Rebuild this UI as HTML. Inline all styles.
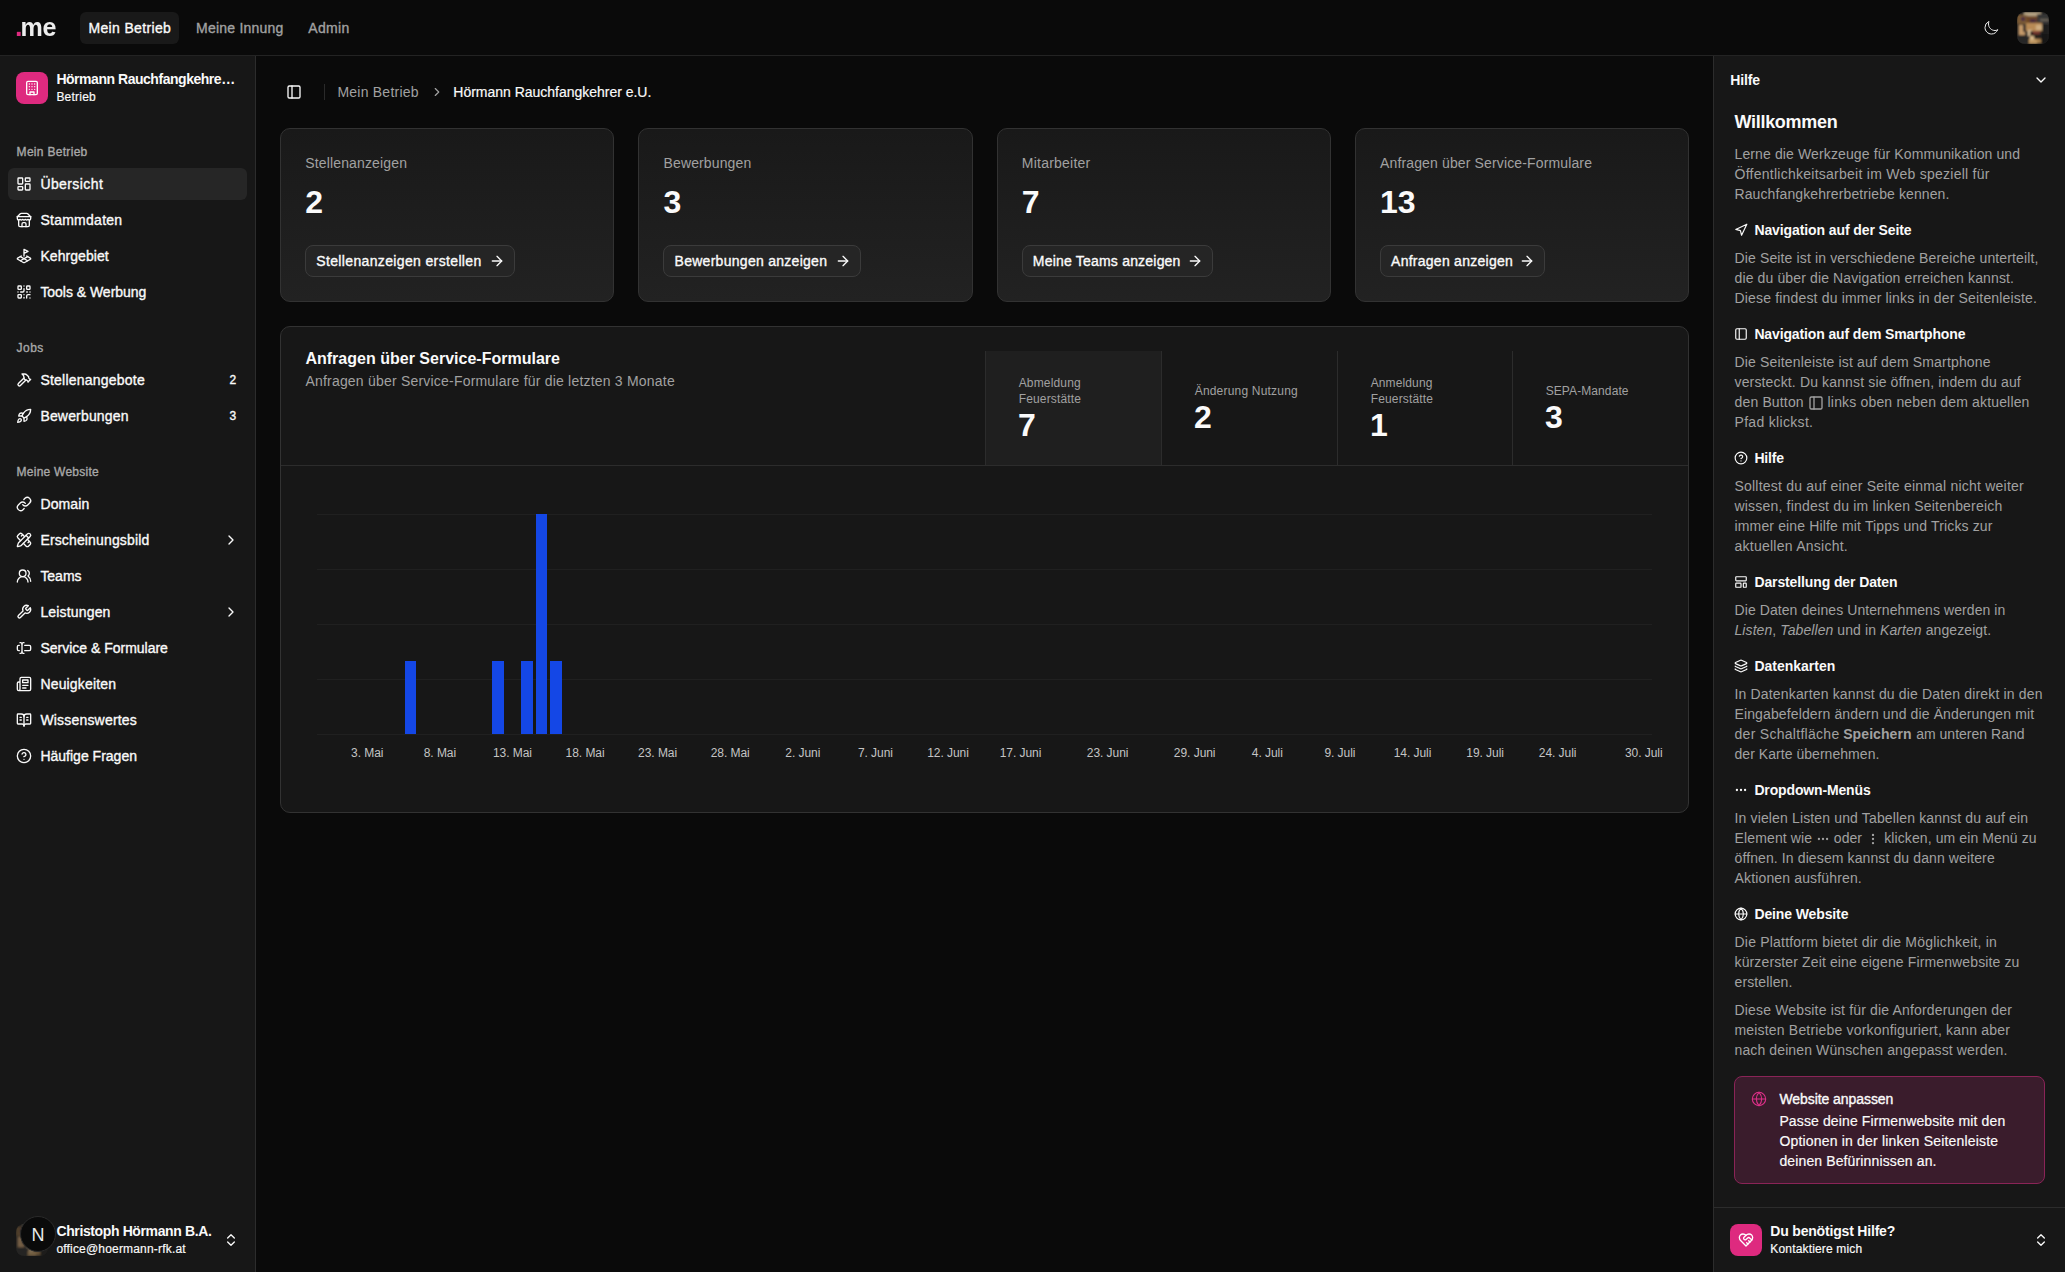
<!DOCTYPE html>
<html lang="de"><head><meta charset="utf-8"><title>Mein Betrieb</title>
<style>
*{box-sizing:border-box;margin:0;padding:0}
html,body{width:2065px;height:1272px;overflow:hidden;background:#0a0a0a}
body{font-family:"Liberation Sans",sans-serif;color:#fafafa;position:relative;font-size:14px}
.a{position:absolute}
.t{position:absolute;white-space:nowrap;line-height:20px;font-size:14px}
.s12{font-size:12px;line-height:16px}
.s16{font-size:16px;line-height:20px}
.s18{font-size:18px;line-height:24px}
.s30{font-size:32px;line-height:30px}
.m{-webkit-text-stroke:.35px currentColor}
.r{-webkit-text-stroke:.18px currentColor}
.b{font-weight:700}
.mu{color:#a1a1a1}
svg{position:absolute;fill:none;stroke:currentColor;stroke-width:2;stroke-linecap:round;stroke-linejoin:round;overflow:visible}
</style></head>
<body>
<div class="a" style="left:0px;top:55px;width:2065px;height:1px;background:#232323"></div>
<div class="a" style="left:80px;top:12px;width:99px;height:32px;background:#191919;border-radius:6px"></div>
<svg viewBox="0 0 24 24" width="16" height="16" style="left:1983.0px;top:20.0px;color:#f0f0f0;stroke-width:1.5"><path d="M21.752 15.002A9.72 9.72 0 0 1 18 15.75c-5.385 0-9.75-4.365-9.75-9.75 0-1.33.266-2.597.748-3.752A9.753 9.753 0 0 0 3 11.25C3 16.635 7.365 21 12.75 21a9.753 9.753 0 0 0 9.002-5.998Z"/></svg>
<svg viewBox="0 0 32 32" width="32" height="32" style="left:2017px;top:12px;stroke:none;overflow:hidden;border-radius:8px"><defs><filter id="avb1" x="-10%" y="-10%" width="120%" height="120%"><feGaussianBlur stdDeviation="1.1"/></filter></defs><rect width="32" height="32" fill="#242321"/><g filter="url(#avb1)" opacity="1"><rect x="0" y="0" width="32" height="32" fill="#242321"/><rect x="7" y="0" width="17" height="4" fill="#b5a384"/><rect x="0" y="3" width="10" height="9" fill="#7d5c36"/><rect x="4" y="5" width="4" height="4" fill="#4a2a40"/><rect x="9" y="4" width="13" height="7" fill="#6e4726"/><rect x="13" y="7" width="6" height="5" fill="#4a2c3a"/><rect x="20" y="2" width="12" height="10" fill="#343434"/><rect x="23" y="7" width="9" height="2" fill="#6a6258"/><rect x="2" y="13" width="6" height="10" fill="#c79c6c"/><rect x="6" y="12" width="3" height="8" fill="#2a2a2a"/><rect x="9" y="11" width="16" height="8" fill="#b88a55"/><rect x="19" y="13" width="6" height="5" fill="#cfae82"/><rect x="11" y="18" width="4" height="6" fill="#e0c49c"/><rect x="25" y="12" width="7" height="20" fill="#1c1c1c"/><rect x="13" y="19" width="10" height="7" fill="#2b241f"/><rect x="16" y="19" width="7" height="3" fill="#7a3a30"/><rect x="0" y="23" width="11" height="9" fill="#262626"/><rect x="12" y="27" width="8" height="5" fill="#c09862"/><rect x="13" y="24" width="4" height="4" fill="#d9b98a"/><rect x="20" y="27" width="4" height="4" fill="#a8814e"/><rect x="24" y="22" width="8" height="10" fill="#141414"/></g></svg>
<div class="a" style="left:0px;top:56px;width:255px;height:1216px;background:#171717"></div>
<div class="a" style="left:255px;top:56px;width:1px;height:1216px;background:#2c2c2c"></div>
<div class="a" style="left:16px;top:72px;width:32px;height:32px;background:#de2a7f;border-radius:8px"></div>
<svg viewBox="0 0 24 24" width="16" height="16" style="left:24.0px;top:80.0px;color:#fff;stroke-width:2"><rect width="16" height="20" x="4" y="2" rx="2" ry="2"/><path d="M9 22v-4h6v4"/><path d="M8 6h.01"/><path d="M16 6h.01"/><path d="M12 6h.01"/><path d="M12 10h.01"/><path d="M12 14h.01"/><path d="M16 10h.01"/><path d="M16 14h.01"/><path d="M8 10h.01"/><path d="M8 14h.01"/></svg>
<div class="a" style="left:8px;top:168px;width:239px;height:32px;background:#262626;border-radius:6px"></div>
<svg viewBox="0 0 24 24" width="16" height="16" style="left:16.0px;top:176.0px;color:#fafafa;stroke-width:2"><rect width="7" height="9" x="3" y="3" rx="1"/><rect width="7" height="5" x="14" y="3" rx="1"/><rect width="7" height="9" x="14" y="12" rx="1"/><rect width="7" height="5" x="3" y="16" rx="1"/></svg>
<svg viewBox="0 0 24 24" width="16" height="16" style="left:16.0px;top:212.0px;color:#fafafa;stroke-width:2"><path d="m2 7 4.41-4.41A2 2 0 0 1 7.83 2h8.34a2 2 0 0 1 1.42.59L22 7"/><path d="M4 12v8a2 2 0 0 0 2 2h12a2 2 0 0 0 2-2v-8"/><path d="M15 22v-4a2 2 0 0 0-2-2h-2a2 2 0 0 0-2 2v4"/><path d="M2 7h20"/><path d="M22 7v3a2 2 0 0 1-2 2a2.7 2.7 0 0 1-1.59-.63.7.7 0 0 0-.82 0A2.7 2.7 0 0 1 16 12a2.7 2.7 0 0 1-1.59-.63.7.7 0 0 0-.82 0A2.7 2.7 0 0 1 12 12a2.7 2.7 0 0 1-1.59-.63.7.7 0 0 0-.82 0A2.7 2.7 0 0 1 8 12a2.7 2.7 0 0 1-1.59-.63.7.7 0 0 0-.82 0A2.7 2.7 0 0 1 4 12a2 2 0 0 1-2-2V7"/></svg>
<svg viewBox="0 0 24 24" width="16" height="16" style="left:16.0px;top:248.0px;color:#fafafa;stroke-width:2"><path d="m12 8 6-3-6-3v10"/><path d="m8 11.99-5.5 3.14a1 1 0 0 0 0 1.74l8.5 4.86a2 2 0 0 0 2 0l8.5-4.86a1 1 0 0 0 0-1.74L16 12"/><path d="m6.49 12.85 11.02 6.3"/><path d="M17.51 12.85 6.5 19.15"/></svg>
<svg viewBox="0 0 24 24" width="16" height="16" style="left:16.0px;top:284.0px;color:#fafafa;stroke-width:2"><rect width="5" height="5" x="3" y="3" rx="1"/><rect width="5" height="5" x="16" y="3" rx="1"/><rect width="5" height="5" x="3" y="16" rx="1"/><path d="M21 16h-3a2 2 0 0 0-2 2v3"/><path d="M21 21v.01"/><path d="M12 7v3a2 2 0 0 1-2 2H7"/><path d="M3 12h.01"/><path d="M12 3h.01"/><path d="M12 16v.01"/><path d="M16 12h1"/><path d="M21 12v.01"/><path d="M12 21v-1"/></svg>
<svg viewBox="0 0 24 24" width="16" height="16" style="left:16.0px;top:372.0px;color:#fafafa;stroke-width:2"><path d="m15 12-8.373 8.373a1 1 0 1 1-3-3L12 9"/><path d="m18 15 4-4"/><path d="m21.5 11.5-1.914-1.914A2 2 0 0 1 19 8.172V7l-2.26-2.26a6 6 0 0 0-4.202-1.756L9 2.96l.92.82A6.18 6.18 0 0 1 12 8.4V10l2 2h1.172a2 2 0 0 1 1.414.586L18.5 14.5"/></svg>
<svg viewBox="0 0 24 24" width="16" height="16" style="left:16.0px;top:408.0px;color:#fafafa;stroke-width:2"><path d="M4.5 16.5c-1.5 1.26-2 5-2 5s3.74-.5 5-2c.71-.84.7-2.13-.09-2.91a2.18 2.18 0 0 0-2.91-.09z"/><path d="m12 15-3-3a22 22 0 0 1 2-3.95A12.88 12.88 0 0 1 22 2c0 2.72-.78 7.5-6 11a22.35 22.35 0 0 1-4 2z"/><path d="M9 12H4s.55-3.03 2-4c1.62-1.08 5 0 5 0"/><path d="M12 15v5s3.03-.55 4-2c1.08-1.62 0-5 0-5"/></svg>
<svg viewBox="0 0 24 24" width="16" height="16" style="left:16.0px;top:496.0px;color:#fafafa;stroke-width:2"><path d="M10 13a5 5 0 0 0 7.54.54l3-3a5 5 0 0 0-7.07-7.07l-1.72 1.71"/><path d="M14 11a5 5 0 0 0-7.54-.54l-3 3a5 5 0 0 0 7.07 7.07l1.71-1.71"/></svg>
<svg viewBox="0 0 24 24" width="16" height="16" style="left:16.0px;top:532.0px;color:#fafafa;stroke-width:2"><path d="M13 7 8.7 2.7a2.41 2.41 0 0 0-3.4 0L2.7 5.3a2.41 2.41 0 0 0 0 3.4L7 13"/><path d="m8 6 2-2"/><path d="m18 16 2-2"/><path d="m17 11 4.3 4.3c.94.94.94 2.46 0 3.4l-2.6 2.6c-.94.94-2.46.94-3.4 0L11 17"/><path d="M21.174 6.812a1 1 0 0 0-3.986-3.987L3.842 16.174a2 2 0 0 0-.5.83l-1.321 4.352a.5.5 0 0 0 .623.622l4.353-1.32a2 2 0 0 0 .83-.497z"/><path d="m15 5 4 4"/></svg>
<svg viewBox="0 0 24 24" width="16" height="16" style="left:223.0px;top:532.0px;color:#fafafa;stroke-width:2"><path d="m9 18 6-6-6-6"/></svg>
<svg viewBox="0 0 24 24" width="16" height="16" style="left:16.0px;top:568.0px;color:#fafafa;stroke-width:2"><path d="M18 21a8 8 0 0 0-16 0"/><circle cx="10" cy="8" r="5"/><path d="M22 20c0-3.37-2-6.5-4-8a5 5 0 0 0-.45-8.3"/></svg>
<svg viewBox="0 0 24 24" width="16" height="16" style="left:16.0px;top:604.0px;color:#fafafa;stroke-width:2"><path d="M14.7 6.3a1 1 0 0 0 0 1.4l1.6 1.6a1 1 0 0 0 1.4 0l3.77-3.77a6 6 0 0 1-7.94 7.94l-6.91 6.91a2.12 2.12 0 0 1-3-3l6.91-6.91a6 6 0 0 1 7.94-7.94l-3.76 3.76z"/></svg>
<svg viewBox="0 0 24 24" width="16" height="16" style="left:223.0px;top:604.0px;color:#fafafa;stroke-width:2"><path d="m9 18 6-6-6-6"/></svg>
<svg viewBox="0 0 24 24" width="16" height="16" style="left:16.0px;top:640.0px;color:#fafafa;stroke-width:2"><path d="M12 20h-1a2 2 0 0 1-2-2 2 2 0 0 1-2 2H6"/><path d="M13 8h7a2 2 0 0 1 2 2v4a2 2 0 0 1-2 2h-7"/><path d="M5 16H4a2 2 0 0 1-2-2v-4a2 2 0 0 1 2-2h1"/><path d="M6 4h1a2 2 0 0 1 2 2 2 2 0 0 1 2-2h1"/><path d="M9 6v12"/></svg>
<svg viewBox="0 0 24 24" width="16" height="16" style="left:16.0px;top:676.0px;color:#fafafa;stroke-width:2"><path d="M4 22h16a2 2 0 0 0 2-2V4a2 2 0 0 0-2-2H8a2 2 0 0 0-2 2v16a2 2 0 0 1-2 2Zm0 0a2 2 0 0 1-2-2v-9c0-1.1.9-2 2-2h2"/><path d="M18 14h-8"/><path d="M15 18h-5"/><path d="M10 6h8v4h-8V6Z"/></svg>
<svg viewBox="0 0 24 24" width="16" height="16" style="left:16.0px;top:712.0px;color:#fafafa;stroke-width:2"><path d="M12 7v14"/><path d="M16 12h2"/><path d="M16 8h2"/><path d="M3 18a1 1 0 0 1-1-1V4a1 1 0 0 1 1-1h5a4 4 0 0 1 4 4 4 4 0 0 1 4-4h5a1 1 0 0 1 1 1v13a1 1 0 0 1-1 1h-6a3 3 0 0 0-3 3 3 3 0 0 0-3-3z"/><path d="M6 12h2"/><path d="M6 8h2"/></svg>
<svg viewBox="0 0 24 24" width="16" height="16" style="left:16.0px;top:748.0px;color:#fafafa;stroke-width:2"><circle cx="12" cy="12" r="10"/><path d="M9.09 9a3 3 0 0 1 5.83 1c0 2-3 3-3 3"/><path d="M12 17h.01"/></svg>
<svg viewBox="0 0 32 32" width="32" height="32" style="left:16px;top:1224px;stroke:none;overflow:hidden;border-radius:8px"><defs><filter id="avb2" x="-10%" y="-10%" width="120%" height="120%"><feGaussianBlur stdDeviation="1.1"/></filter></defs><rect width="32" height="32" fill="#242321"/><g filter="url(#avb2)" opacity="0.5"><rect x="0" y="0" width="32" height="32" fill="#242321"/><rect x="7" y="0" width="17" height="4" fill="#b5a384"/><rect x="0" y="3" width="10" height="9" fill="#7d5c36"/><rect x="4" y="5" width="4" height="4" fill="#4a2a40"/><rect x="9" y="4" width="13" height="7" fill="#6e4726"/><rect x="13" y="7" width="6" height="5" fill="#4a2c3a"/><rect x="20" y="2" width="12" height="10" fill="#343434"/><rect x="23" y="7" width="9" height="2" fill="#6a6258"/><rect x="2" y="13" width="6" height="10" fill="#c79c6c"/><rect x="6" y="12" width="3" height="8" fill="#2a2a2a"/><rect x="9" y="11" width="16" height="8" fill="#b88a55"/><rect x="19" y="13" width="6" height="5" fill="#cfae82"/><rect x="11" y="18" width="4" height="6" fill="#e0c49c"/><rect x="25" y="12" width="7" height="20" fill="#1c1c1c"/><rect x="13" y="19" width="10" height="7" fill="#2b241f"/><rect x="16" y="19" width="7" height="3" fill="#7a3a30"/><rect x="0" y="23" width="11" height="9" fill="#262626"/><rect x="12" y="27" width="8" height="5" fill="#c09862"/><rect x="13" y="24" width="4" height="4" fill="#d9b98a"/><rect x="20" y="27" width="4" height="4" fill="#a8814e"/><rect x="24" y="22" width="8" height="10" fill="#141414"/></g></svg>
<div class="a" style="left:20px;top:1216px;width:36px;height:36px;border-radius:18px;background:#0a0a0a;border:1px solid #2a2a2a"></div>
<svg viewBox="0 0 24 24" width="16" height="16" style="left:223.0px;top:1232.4px;color:#fafafa;stroke-width:2"><path d="m7 15 5 5 5-5"/><path d="m7 9 5-5 5 5"/></svg>
<svg viewBox="0 0 24 24" width="16" height="16" style="left:286.0px;top:84.0px;color:#fafafa;stroke-width:2"><rect width="18" height="18" x="3" y="3" rx="2"/><path d="M9 3v18"/></svg>
<div class="a" style="left:324px;top:84px;width:1px;height:16px;background:#2a2a2a"></div>
<svg viewBox="0 0 24 24" width="14" height="14" style="left:430.0px;top:85.0px;color:#a1a1a1;stroke-width:2"><path d="m9 18 6-6-6-6"/></svg>
<div class="a" style="left:280px;top:128px;width:334.25px;height:174px;background:linear-gradient(to top,#222222,#191919);border:1px solid #323232;border-radius:10px"></div>
<div class="a" style="left:305px;top:245px;width:210.2px;height:32px;background:#252525;border:1px solid #3b3b3b;border-radius:8px"></div>
<svg viewBox="0 0 24 24" width="16" height="16" style="left:488.90000000000003px;top:253.2px;color:#fafafa;stroke-width:2"><path d="M5 12h14"/><path d="m12 5 7 7-7 7"/></svg>
<div class="a" style="left:638.25px;top:128px;width:334.25px;height:174px;background:linear-gradient(to top,#222222,#191919);border:1px solid #323232;border-radius:10px"></div>
<div class="a" style="left:663.25px;top:245px;width:197.8px;height:32px;background:#252525;border:1px solid #3b3b3b;border-radius:8px"></div>
<svg viewBox="0 0 24 24" width="16" height="16" style="left:834.75px;top:253.2px;color:#fafafa;stroke-width:2"><path d="M5 12h14"/><path d="m12 5 7 7-7 7"/></svg>
<div class="a" style="left:996.5px;top:128px;width:334.25px;height:174px;background:linear-gradient(to top,#222222,#191919);border:1px solid #323232;border-radius:10px"></div>
<div class="a" style="left:1021.5px;top:245px;width:191.6px;height:32px;background:#252525;border:1px solid #3b3b3b;border-radius:8px"></div>
<svg viewBox="0 0 24 24" width="16" height="16" style="left:1186.8px;top:253.2px;color:#fafafa;stroke-width:2"><path d="M5 12h14"/><path d="m12 5 7 7-7 7"/></svg>
<div class="a" style="left:1354.75px;top:128px;width:334.25px;height:174px;background:linear-gradient(to top,#222222,#191919);border:1px solid #323232;border-radius:10px"></div>
<div class="a" style="left:1379.75px;top:245px;width:165.5px;height:32px;background:#252525;border:1px solid #3b3b3b;border-radius:8px"></div>
<svg viewBox="0 0 24 24" width="16" height="16" style="left:1518.95px;top:253.2px;color:#fafafa;stroke-width:2"><path d="M5 12h14"/><path d="m12 5 7 7-7 7"/></svg>
<div class="a" style="left:280px;top:326px;width:1409px;height:487px;background:#171717;border:1px solid #323232;border-radius:10px"></div>
<div class="a" style="left:281px;top:465px;width:1407px;height:1px;background:#2c2c2c"></div>
<div class="a" style="left:985px;top:351px;width:176px;height:114px;background:#1f1f1f"></div>
<div class="a" style="left:985px;top:351px;width:1px;height:114px;background:#2c2c2c"></div>
<div class="a" style="left:1161px;top:351px;width:1px;height:114px;background:#2c2c2c"></div>
<div class="a" style="left:1337px;top:351px;width:1px;height:114px;background:#2c2c2c"></div>
<div class="a" style="left:1512px;top:351px;width:1px;height:114px;background:#2c2c2c"></div>
<div class="a" style="left:316.5px;top:514px;width:1335.5px;height:1px;background:#202020"></div>
<div class="a" style="left:316.5px;top:569px;width:1335.5px;height:1px;background:#202020"></div>
<div class="a" style="left:316.5px;top:624px;width:1335.5px;height:1px;background:#202020"></div>
<div class="a" style="left:316.5px;top:679px;width:1335.5px;height:1px;background:#202020"></div>
<div class="a" style="left:316.5px;top:734px;width:1335.5px;height:1px;background:#202020"></div>
<div class="a" style="left:405.1px;top:660.5px;width:11.4px;height:73.5px;background:#1447e6"></div>
<div class="a" style="left:492.2px;top:660.5px;width:11.4px;height:73.5px;background:#1447e6"></div>
<div class="a" style="left:521.3px;top:660.5px;width:11.4px;height:73.5px;background:#1447e6"></div>
<div class="a" style="left:535.8px;top:514px;width:11.4px;height:220px;background:#1447e6"></div>
<div class="a" style="left:550.3px;top:660.5px;width:11.4px;height:73.5px;background:#1447e6"></div>
<div class="t s12" style="left:327.3px;top:744.7px;width:80px;text-align:center;color:#c4c4c4;letter-spacing:-.05px">3. Mai</div>
<div class="t s12" style="left:399.9px;top:744.7px;width:80px;text-align:center;color:#c4c4c4;letter-spacing:-.05px">8. Mai</div>
<div class="t s12" style="left:472.5px;top:744.7px;width:80px;text-align:center;color:#c4c4c4;letter-spacing:-.05px">13. Mai</div>
<div class="t s12" style="left:545.1px;top:744.7px;width:80px;text-align:center;color:#c4c4c4;letter-spacing:-.05px">18. Mai</div>
<div class="t s12" style="left:617.6px;top:744.7px;width:80px;text-align:center;color:#c4c4c4;letter-spacing:-.05px">23. Mai</div>
<div class="t s12" style="left:690.2px;top:744.7px;width:80px;text-align:center;color:#c4c4c4;letter-spacing:-.05px">28. Mai</div>
<div class="t s12" style="left:762.8px;top:744.7px;width:80px;text-align:center;color:#c4c4c4;letter-spacing:-.05px">2. Juni</div>
<div class="t s12" style="left:835.4px;top:744.7px;width:80px;text-align:center;color:#c4c4c4;letter-spacing:-.05px">7. Juni</div>
<div class="t s12" style="left:908.0px;top:744.7px;width:80px;text-align:center;color:#c4c4c4;letter-spacing:-.05px">12. Juni</div>
<div class="t s12" style="left:980.5px;top:744.7px;width:80px;text-align:center;color:#c4c4c4;letter-spacing:-.05px">17. Juni</div>
<div class="t s12" style="left:1067.6px;top:744.7px;width:80px;text-align:center;color:#c4c4c4;letter-spacing:-.05px">23. Juni</div>
<div class="t s12" style="left:1154.7px;top:744.7px;width:80px;text-align:center;color:#c4c4c4;letter-spacing:-.05px">29. Juni</div>
<div class="t s12" style="left:1227.3px;top:744.7px;width:80px;text-align:center;color:#c4c4c4;letter-spacing:-.05px">4. Juli</div>
<div class="t s12" style="left:1299.9px;top:744.7px;width:80px;text-align:center;color:#c4c4c4;letter-spacing:-.05px">9. Juli</div>
<div class="t s12" style="left:1372.5px;top:744.7px;width:80px;text-align:center;color:#c4c4c4;letter-spacing:-.05px">14. Juli</div>
<div class="t s12" style="left:1445.1px;top:744.7px;width:80px;text-align:center;color:#c4c4c4;letter-spacing:-.05px">19. Juli</div>
<div class="t s12" style="left:1517.6px;top:744.7px;width:80px;text-align:center;color:#c4c4c4;letter-spacing:-.05px">24. Juli</div>
<div class="t s12" style="left:1603.8px;top:744.7px;width:80px;text-align:center;color:#c4c4c4;letter-spacing:-.05px">30. Juli</div>
<div class="a" style="left:1713px;top:56px;width:352px;height:1216px;background:#171717"></div>
<div class="a" style="left:1713px;top:56px;width:1px;height:1216px;background:#2c2c2c"></div>
<svg viewBox="0 0 24 24" width="16" height="16" style="left:2033.0px;top:72.0px;color:#fafafa;stroke-width:2"><path d="m6 9 6 6 6-6"/></svg>
<svg viewBox="0 0 24 24" width="14" height="14" style="left:1734.0px;top:223.0px;color:#fafafa;stroke-width:2"><polygon points="3 11 22 2 13 21 11 13 3 11"/></svg>
<svg viewBox="0 0 24 24" width="14" height="14" style="left:1734.0px;top:327.0px;color:#fafafa;stroke-width:2"><rect width="18" height="18" x="3" y="3" rx="2"/><path d="M9 3v18"/></svg>
<svg viewBox="0 0 24 24" width="16" height="16" style="left:1808.1px;top:394.5px;color:#a1a1a1;stroke-width:2"><rect width="18" height="18" x="3" y="3" rx="2"/><path d="M9 3v18"/></svg>
<svg viewBox="0 0 24 24" width="14" height="14" style="left:1734.0px;top:451.0px;color:#fafafa;stroke-width:2"><circle cx="12" cy="12" r="10"/><path d="M9.09 9a3 3 0 0 1 5.83 1c0 2-3 3-3 3"/><path d="M12 17h.01"/></svg>
<svg viewBox="0 0 24 24" width="14" height="14" style="left:1734.0px;top:575.0px;color:#fafafa;stroke-width:2"><rect width="18" height="7" x="3" y="3" rx="1"/><rect width="9" height="7" x="3" y="14" rx="1"/><rect width="5" height="7" x="16" y="14" rx="1"/></svg>
<svg viewBox="0 0 24 24" width="14" height="14" style="left:1734.0px;top:659.0px;color:#fafafa;stroke-width:2"><path d="M12.83 2.18a2 2 0 0 0-1.66 0L2.6 6.08a1 1 0 0 0 0 1.83l8.58 3.91a2 2 0 0 0 1.66 0l8.58-3.9a1 1 0 0 0 0-1.83z"/><path d="M2 12a1 1 0 0 0 .58.91l8.6 3.91a2 2 0 0 0 1.65 0l8.58-3.9A1 1 0 0 0 22 12"/><path d="M2 17a1 1 0 0 0 .58.91l8.6 3.91a2 2 0 0 0 1.65 0l8.58-3.9A1 1 0 0 0 22 17"/></svg>
<svg viewBox="0 0 24 24" width="14" height="14" style="left:1734.0px;top:783.0px;color:#fafafa;stroke-width:2"><circle cx="12" cy="12" r="1"/><circle cx="19" cy="12" r="1"/><circle cx="5" cy="12" r="1"/></svg>
<svg viewBox="0 0 24 24" width="14" height="14" style="left:1816.0px;top:831.6px;color:#a1a1a1;stroke-width:2"><circle cx="12" cy="12" r="1"/><circle cx="19" cy="12" r="1"/><circle cx="5" cy="12" r="1"/></svg>
<svg viewBox="0 0 24 24" width="14" height="14" style="left:1865.8px;top:831.6px;color:#a1a1a1;stroke-width:2"><circle cx="12" cy="12" r="1"/><circle cx="12" cy="5" r="1"/><circle cx="12" cy="19" r="1"/></svg>
<svg viewBox="0 0 24 24" width="14" height="14" style="left:1734.0px;top:907.0px;color:#fafafa;stroke-width:2"><circle cx="12" cy="12" r="10"/><path d="M12 2a14.5 14.5 0 0 0 0 20 14.5 14.5 0 0 0 0-20"/><path d="M2 12h20"/></svg>
<div class="a" style="left:1734px;top:1076px;width:311px;height:108px;background:#3a1c2c;border:1px solid #8a2457;border-radius:8px"></div>
<svg viewBox="0 0 24 24" width="16" height="16" style="left:1751.0px;top:1091.0px;color:#e0308a;stroke-width:1.6"><circle cx="12" cy="12" r="10"/><path d="M12 2a14.5 14.5 0 0 0 0 20 14.5 14.5 0 0 0 0-20"/><path d="M2 12h20"/></svg>
<div class="a" style="left:1714px;top:1207px;width:351px;height:1px;background:#2c2c2c"></div>
<div class="a" style="left:1730px;top:1224px;width:32px;height:32px;background:#de2a7f;border-radius:8px"></div>
<svg viewBox="0 0 24 24" width="16" height="16" style="left:1738.0px;top:1232.0px;color:#fff;stroke-width:2"><path d="M19 14c1.49-1.46 3-3.21 3-5.5A5.5 5.5 0 0 0 16.5 3c-1.76 0-3 .5-4.5 2-1.5-1.5-2.74-2-4.5-2A5.5 5.5 0 0 0 2 8.5c0 2.3 1.5 4.05 3 5.5l7 7Z"/><path d="M12 5 9.04 7.96a2.17 2.17 0 0 0 0 3.08c.82.82 2.13.85 3 .07l2.07-1.9a2.82 2.82 0 0 1 3.79 0l2.96 2.66"/><path d="m18 15-2-2"/><path d="m15 18-2-2"/></svg>
<svg viewBox="0 0 24 24" width="16" height="16" style="left:2033.0px;top:1232.4px;color:#fafafa;stroke-width:2"><path d="m7 15 5 5 5-5"/><path d="m7 9 5-5 5 5"/></svg>
<div class="t b logo" style="left:15.4px;top:12px;font-size:26px;line-height:30px;transform:scaleX(.965);transform-origin:0 0;letter-spacing:-.3px;color:#ededed"><span style="color:#de2a7f;font-size:28px;letter-spacing:-2.1px">.</span>me</div>
<div class="t m" style="left:88.4px;top:18px;letter-spacing:0.351px">Mein Betrieb</div>
<div class="t m mu" style="left:196px;top:18px;letter-spacing:0.230px">Meine Innung</div>
<div class="t m mu" style="left:308.2px;top:18px;letter-spacing:0.383px">Admin</div>
<div class="t b" style="left:56.4px;top:69px;letter-spacing:-0.467px">Hörmann Rauchfangkehre…</div>
<div class="t s12 r" style="left:56.4px;top:89px;letter-spacing:0.224px">Betrieb</div>
<div class="t s12 m" style="left:16.6px;top:144px;color:#a8a8a8;letter-spacing:0.302px">Mein Betrieb</div>
<div class="t m" style="left:40.4px;top:174px;letter-spacing:0.407px">Übersicht</div>
<div class="t m" style="left:40.4px;top:210px;letter-spacing:0.263px">Stammdaten</div>
<div class="t m" style="left:40.4px;top:246px;letter-spacing:0.068px">Kehrgebiet</div>
<div class="t m" style="left:40.4px;top:282px;letter-spacing:-0.031px">Tools &amp; Werbung</div>
<div class="t s12 m" style="left:16.6px;top:340px;color:#a8a8a8;letter-spacing:0.460px">Jobs</div>
<div class="t m" style="left:40.4px;top:370px;letter-spacing:0.220px">Stellenangebote</div>
<div class="t s12 m" style="left:229.4px;top:372px;letter-spacing:0.513px">2</div>
<div class="t m" style="left:40.4px;top:406px;letter-spacing:0.172px">Bewerbungen</div>
<div class="t s12 m" style="left:229.4px;top:408px;letter-spacing:0.513px">3</div>
<div class="t s12 m" style="left:16.6px;top:464px;color:#a8a8a8;letter-spacing:0.242px">Meine Website</div>
<div class="t m" style="left:40.4px;top:494px;letter-spacing:0.125px">Domain</div>
<div class="t m" style="left:40.4px;top:530px;letter-spacing:0.148px">Erscheinungsbild</div>
<div class="t m" style="left:40.4px;top:566px;letter-spacing:-0.027px">Teams</div>
<div class="t m" style="left:40.4px;top:602px;letter-spacing:0.168px">Leistungen</div>
<div class="t m" style="left:40.4px;top:638px;letter-spacing:-0.005px">Service &amp; Formulare</div>
<div class="t m" style="left:40.4px;top:674px;letter-spacing:0.169px">Neuigkeiten</div>
<div class="t m" style="left:40.4px;top:710px;letter-spacing:0.189px">Wissenswertes</div>
<div class="t m" style="left:40.4px;top:746px;letter-spacing:0.006px">Häufige Fragen</div>
<div class="t " style="left:31.5px;top:1225px;font-size:18px;line-height:20px;color:#e8e8e8">N</div>
<div class="t b" style="left:56.4px;top:1221px;letter-spacing:-0.375px">Christoph Hörmann B.A.</div>
<div class="t s12 r" style="left:56.4px;top:1241px;letter-spacing:0.184px">office@hoermann-rfk.at</div>
<div class="t mu" style="left:337.4px;top:82px;letter-spacing:0.234px">Mein Betrieb</div>
<div class="t r" style="left:453.3px;top:82px;letter-spacing:-0.016px">Hörmann Rauchfangkehrer e.U.</div>
<div class="t mu" style="left:305.3px;top:153px;letter-spacing:0.144px">Stellenanzeigen</div>
<div class="t s30 b" style="left:305.2px;top:187px;">2</div>
<div class="t m" style="left:316.3px;top:251px;letter-spacing:0.354px">Stellenanzeigen erstellen</div>
<div class="t mu" style="left:663.55px;top:153px;letter-spacing:0.127px">Bewerbungen</div>
<div class="t s30 b" style="left:663.45px;top:187px;">3</div>
<div class="t m" style="left:674.55px;top:251px;letter-spacing:0.279px">Bewerbungen anzeigen</div>
<div class="t mu" style="left:1021.8px;top:153px;letter-spacing:0.224px">Mitarbeiter</div>
<div class="t s30 b" style="left:1021.7px;top:187px;">7</div>
<div class="t m" style="left:1032.8px;top:251px;letter-spacing:0.204px">Meine Teams anzeigen</div>
<div class="t mu" style="left:1380.05px;top:153px;letter-spacing:0.137px">Anfragen über Service-Formulare</div>
<div class="t s30 b" style="left:1379.95px;top:187px;">13</div>
<div class="t m" style="left:1391.05px;top:251px;letter-spacing:0.262px">Anfragen anzeigen</div>
<div class="t s16 b" style="left:305.4px;top:349px;letter-spacing:0.010px">Anfragen über Service-Formulare</div>
<div class="t mu" style="left:305.4px;top:371px;letter-spacing:0.206px">Anfragen über Service-Formulare für die letzten 3 Monate</div>
<div class="t s12 mu" style="left:1018.7px;top:375px;letter-spacing:0.165px">Abmeldung</div>
<div class="t s12 mu" style="left:1018.7px;top:391px;letter-spacing:0.163px">Feuerstätte</div>
<div class="t s30 b" style="left:1018px;top:410px;">7</div>
<div class="t s12 mu" style="left:1194.7px;top:383px;letter-spacing:0.195px">Änderung Nutzung</div>
<div class="t s30 b" style="left:1194px;top:402px;">2</div>
<div class="t s12 mu" style="left:1370.7px;top:375px;letter-spacing:0.120px">Anmeldung</div>
<div class="t s12 mu" style="left:1370.7px;top:391px;letter-spacing:0.163px">Feuerstätte</div>
<div class="t s30 b" style="left:1370px;top:410px;">1</div>
<div class="t s12 mu" style="left:1545.7px;top:383px;letter-spacing:0.089px">SEPA-Mandate</div>
<div class="t s30 b" style="left:1545px;top:402px;">3</div>
<div class="t b" style="left:1730.2px;top:70px;letter-spacing:-0.109px">Hilfe</div>
<div class="t s18 b" style="left:1734.5px;top:110px;letter-spacing:-0.296px">Willkommen</div>
<div class="t mu" style="left:1734.5px;top:144px;letter-spacing:0.122px">Lerne die Werkzeuge für Kommunikation und</div>
<div class="t mu" style="left:1734.5px;top:164px;letter-spacing:0.259px">Öffentlichkeitsarbeit im Web speziell für</div>
<div class="t mu" style="left:1734.5px;top:184px;letter-spacing:0.106px">Rauchfangkehrerbetriebe kennen.</div>
<div class="t b" style="left:1754.4px;top:220px;letter-spacing:-0.099px">Navigation auf der Seite</div>
<div class="t mu" style="left:1734.5px;top:248px;letter-spacing:0.136px">Die Seite ist in verschiedene Bereiche unterteilt,</div>
<div class="t mu" style="left:1734.5px;top:268px;letter-spacing:0.128px">die du über die Navigation erreichen kannst.</div>
<div class="t mu" style="left:1734.5px;top:288px;letter-spacing:0.173px">Diese findest du immer links in der Seitenleiste.</div>
<div class="t b" style="left:1754.4px;top:324px;letter-spacing:-0.128px">Navigation auf dem Smartphone</div>
<div class="t mu" style="left:1734.5px;top:352px;letter-spacing:0.164px">Die Seitenleiste ist auf dem Smartphone</div>
<div class="t mu" style="left:1734.5px;top:372px;letter-spacing:0.144px">versteckt. Du kannst sie öffnen, indem du auf</div>
<div class="t mu" style="left:1734.5px;top:412px;letter-spacing:0.315px">Pfad klickst.</div>
<div class="t mu" style="left:1734.5px;top:392px;letter-spacing:0.157px">den Button</div>
<div class="t mu" style="left:1827.6px;top:392px;letter-spacing:0.169px">links oben neben dem aktuellen</div>
<div class="t b" style="left:1754.4px;top:448px;letter-spacing:-0.149px">Hilfe</div>
<div class="t mu" style="left:1734.5px;top:476px;letter-spacing:0.213px">Solltest du auf einer Seite einmal nicht weiter</div>
<div class="t mu" style="left:1734.5px;top:496px;letter-spacing:0.190px">wissen, findest du im linken Seitenbereich</div>
<div class="t mu" style="left:1734.5px;top:516px;letter-spacing:0.147px">immer eine Hilfe mit Tipps und Tricks zur</div>
<div class="t mu" style="left:1734.5px;top:536px;letter-spacing:0.252px">aktuellen Ansicht.</div>
<div class="t b" style="left:1754.4px;top:572px;letter-spacing:-0.114px">Darstellung der Daten</div>
<div class="t mu" style="left:1734.5px;top:600px;letter-spacing:0.082px">Die Daten deines Unternehmens werden in</div>
<div class="t mu" style="left:1734.5px;top:620px;letter-spacing:0.082px"><i>Listen</i>, <i>Tabellen</i> und in <i>Karten</i> angezeigt.</div>
<div class="t b" style="left:1754.4px;top:656px;letter-spacing:-0.002px">Datenkarten</div>
<div class="t mu" style="left:1734.5px;top:684px;letter-spacing:0.162px">In Datenkarten kannst du die Daten direkt in den</div>
<div class="t mu" style="left:1734.5px;top:704px;letter-spacing:0.125px">Eingabefeldern ändern und die Änderungen mit</div>
<div class="t mu" style="left:1734.5px;top:744px;letter-spacing:0.044px">der Karte übernehmen.</div>
<div class="t mu" style="left:1734.5px;top:724px;letter-spacing:0.287px">der Schaltfläche</div>
<div class="t mu b" style="left:1843.2px;top:724px;letter-spacing:0.089px">Speichern</div>
<div class="t mu" style="left:1916.2px;top:724px;letter-spacing:0.014px">am unteren Rand</div>
<div class="t b" style="left:1754.4px;top:780px;letter-spacing:-0.144px">Dropdown-Menüs</div>
<div class="t mu" style="left:1734.5px;top:808px;letter-spacing:0.144px">In vielen Listen und Tabellen kannst du auf ein</div>
<div class="t mu" style="left:1734.5px;top:848px;letter-spacing:0.112px">öffnen. In diesem kannst du dann weitere</div>
<div class="t mu" style="left:1734.5px;top:868px;letter-spacing:0.151px">Aktionen ausführen.</div>
<div class="t mu" style="left:1734.5px;top:828px;letter-spacing:0.139px">Element wie</div>
<div class="t mu" style="left:1833.8px;top:828px;letter-spacing:0.067px">oder</div>
<div class="t mu" style="left:1884.2px;top:828px;letter-spacing:0.101px">klicken, um ein Menü zu</div>
<div class="t b" style="left:1754.4px;top:904px;letter-spacing:-0.118px">Deine Website</div>
<div class="t mu" style="left:1734.5px;top:932px;letter-spacing:0.203px">Die Plattform bietet dir die Möglichkeit, in</div>
<div class="t mu" style="left:1734.5px;top:952px;letter-spacing:0.129px">kürzerster Zeit eine eigene Firmenwebsite zu</div>
<div class="t mu" style="left:1734.5px;top:972px;letter-spacing:0.119px">erstellen.</div>
<div class="t mu" style="left:1734.5px;top:1000px;letter-spacing:0.161px">Diese Website ist für die Anforderungen der</div>
<div class="t mu" style="left:1734.5px;top:1020px;letter-spacing:0.181px">meisten Betriebe vorkonfiguriert, kann aber</div>
<div class="t mu" style="left:1734.5px;top:1040px;letter-spacing:0.118px">nach deinen Wünschen angepasst werden.</div>
<div class="t m" style="left:1779.4px;top:1089px;letter-spacing:-0.065px">Website anpassen</div>
<div class="t r" style="left:1779.4px;top:1111px;letter-spacing:0.125px">Passe deine Firmenwebsite mit den</div>
<div class="t r" style="left:1779.4px;top:1131px;letter-spacing:0.181px">Optionen in der linken Seitenleiste</div>
<div class="t r" style="left:1779.4px;top:1151px;letter-spacing:0.129px">deinen Befürinnissen an.</div>
<div class="t b" style="left:1770.3px;top:1221px;letter-spacing:-0.186px">Du benötigst Hilfe?</div>
<div class="t s12 r" style="left:1770.3px;top:1241px;letter-spacing:0.164px">Kontaktiere mich</div>
</body></html>
